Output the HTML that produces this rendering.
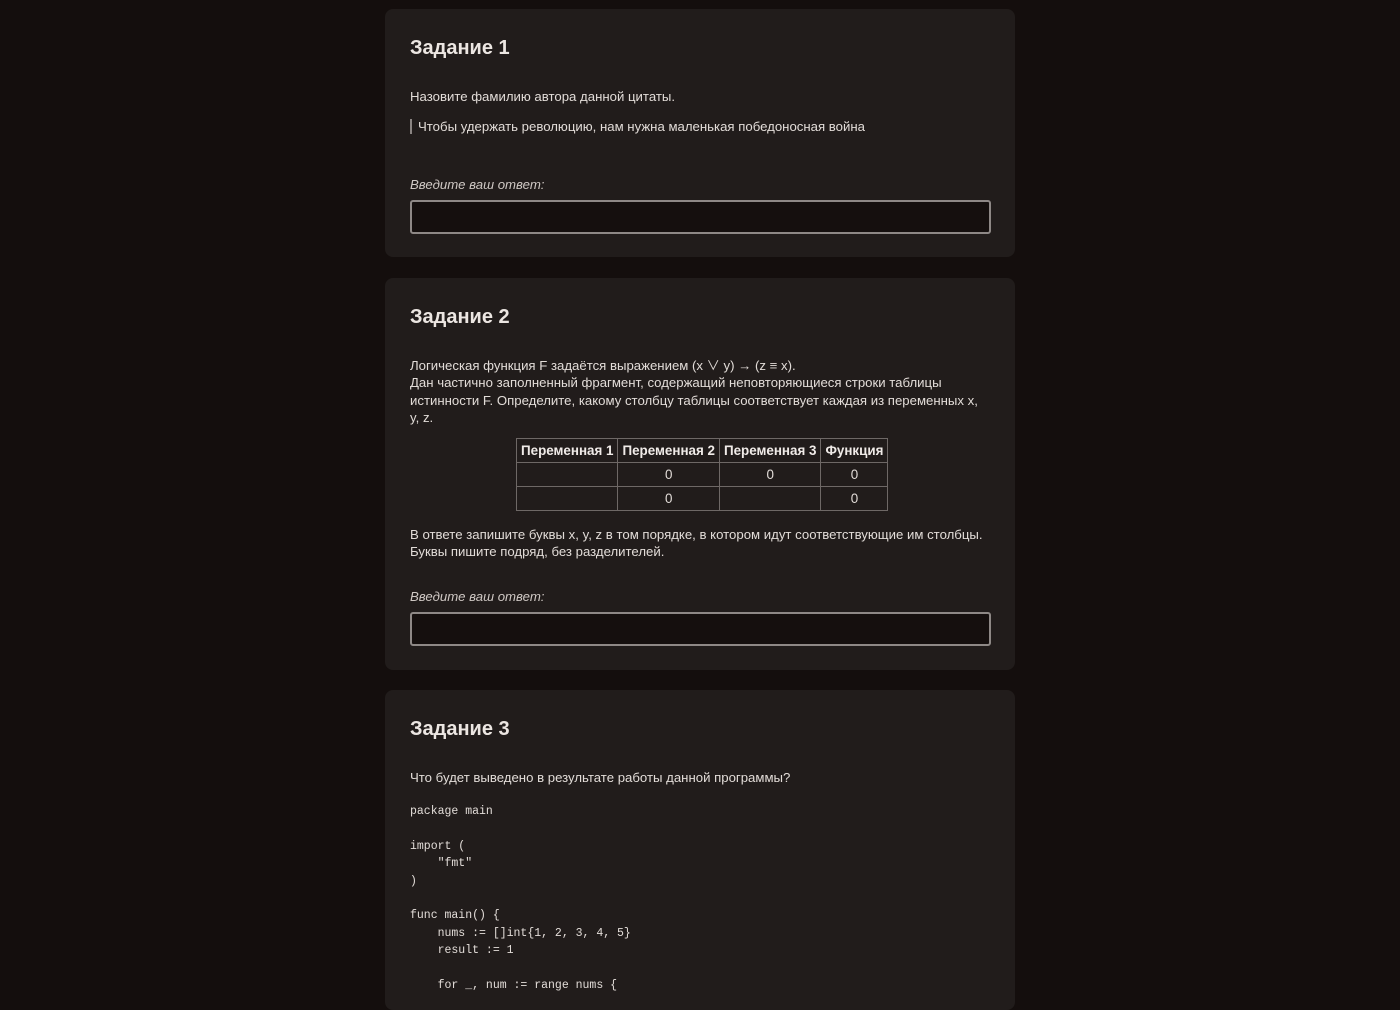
<!DOCTYPE html>
<html><head><meta charset="utf-8"><style>
html,body{margin:0;background:#140e0d;width:1400px;height:986px;overflow:hidden;font-family:"Liberation Sans","Noto Sans CJK SC",sans-serif;color:#e2dcd8;}
.card{position:absolute;left:385px;width:630px;background:#211c1b;border-radius:8px;}
.abs{position:absolute;left:25px;white-space:nowrap}
h2{margin:0;font-size:20px;font-weight:bold;color:#ece6e2}
.t{font-size:13.2px}
.lbl{font-style:italic;font-size:13.2px;color:#cfc8c4}
.inp{position:absolute;left:25px;width:577px;height:30px;background:#150f0e;border:2px solid #8e8886;border-radius:3px}
table{border-collapse:collapse;font-size:13.4px}
td,th{border:1px solid #6e6866;height:23px;padding:0 4px;text-align:center}
th{font-weight:bold;color:#f0ebe8}
pre{margin:0;font-family:"Liberation Mono",monospace;font-size:11.5px;line-height:17.4px;color:#e2dcd8;white-space:pre !important}
</style></head><body>
<div class="card" style="top:9px;height:248px">
 <h2 class="abs" style="top:28px">Задание 1</h2>
 <div class="abs t" style="top:80px">Назовите фамилию автора данной цитаты.</div>
 <div class="abs t" style="top:110px;border-left:2px solid #8a8482;padding-left:6px">Чтобы удержать революцию, нам нужна маленькая победоносная война</div>
 <div class="abs lbl" style="top:168px">Введите ваш ответ:</div>
 <div class="inp" style="top:191px"></div>
</div>
<div class="card" style="top:278px;height:392px">
 <h2 class="abs" style="top:28px">Задание 2</h2>
 <div class="abs t" style="top:79px;line-height:17.4px">Логическая функция F задаётся выражением (x ∨ y) → (z ≡ x).<br>Дан частично заполненный фрагмент, содержащий неповторяющиеся строки таблицы<br>истинности F. Определите, какому столбцу таблицы соответствует каждая из переменных x,<br>y, z.</div>
 <table style="position:absolute;left:131px;top:160px">
  <tr><th>Переменная 1</th><th>Переменная 2</th><th>Переменная 3</th><th>Функция</th></tr>
  <tr><td></td><td>0</td><td>0</td><td>0</td></tr>
  <tr><td></td><td>0</td><td></td><td>0</td></tr>
 </table>
 <div class="abs t" style="top:248px;line-height:17.4px">В ответе запишите буквы x, y, z в том порядке, в котором идут соответствующие им столбцы.<br>Буквы пишите подряд, без разделителей.</div>
 <div class="abs lbl" style="top:311px">Введите ваш ответ:</div>
 <div class="inp" style="top:334px"></div>
</div>
<div class="card" style="top:690px;height:320px">
 <h2 class="abs" style="top:28px">Задание 3</h2>
 <div class="abs t" style="top:80px">Что будет выведено в результате работы данной программы?</div>
 <pre class="abs" style="top:113px">package main

import (
    "fmt"
)

func main() {
    nums := []int{1, 2, 3, 4, 5}
    result := 1

    for _, num := range nums {</pre>
</div>
</body></html>
